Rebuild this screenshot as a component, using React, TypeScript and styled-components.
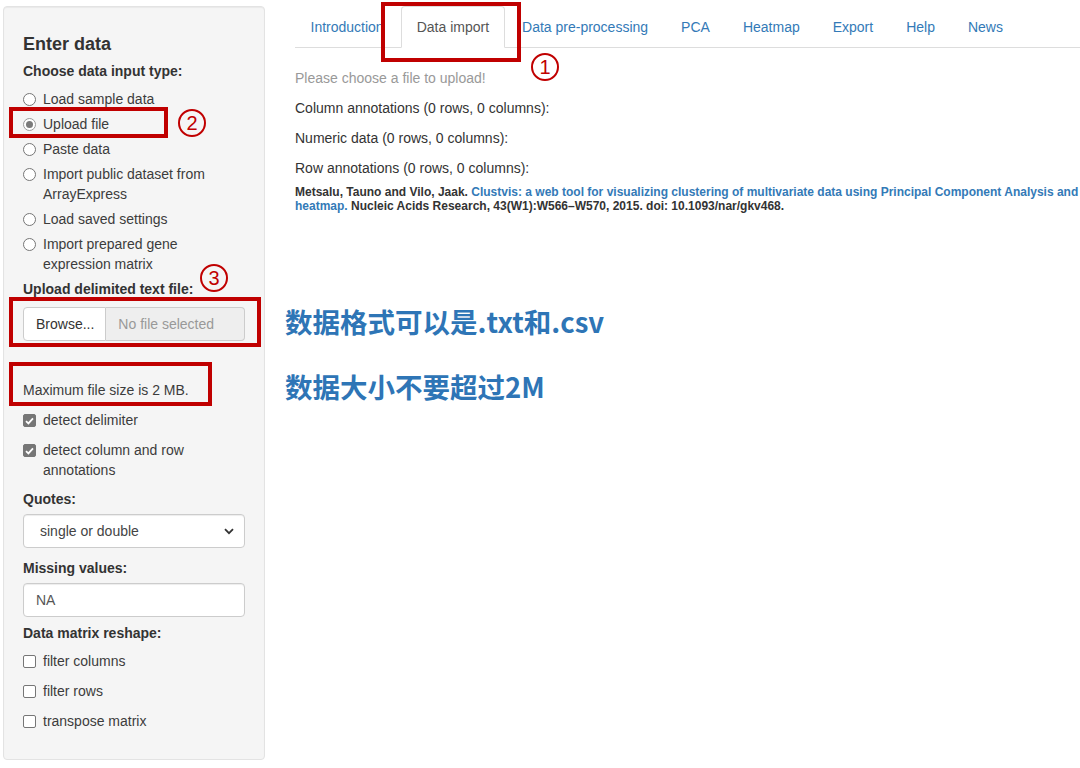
import React from "react";
import styled, { createGlobalStyle } from "styled-components";

const Global = createGlobalStyle`
  html, body { margin: 0; padding: 0; background: #fff; }
  body {
    font-family: "Liberation Sans", Arial, Helvetica, sans-serif;
    font-size: 14px;
    line-height: 20px;
    color: #333;
    width: 1080px;
    height: 768px;
    overflow: hidden;
  }
  * { box-sizing: border-box; }
`;

const Page = styled.div`
  position: relative;
  display: grid;
  grid-template-columns: 262px 1fr;
  column-gap: 30px;
  padding: 6px 0 0 3px;
  height: 768px;
`;

const Panel = styled.aside`
  align-self: start;
  display: flex;
  flex-direction: column;
  background: #f5f5f5;
  border: 1px solid #e3e3e3;
  border-radius: 4px;
  box-shadow: inset 0 1px 1px rgba(0, 0, 0, 0.05);
  padding: 27px 19px 28px;
`;

const Heading = styled.h4`
  margin: 0;
  font-size: 18px;
  line-height: 20px;
  font-weight: bold;
  color: #333;
`;

const FieldLabel = styled.div<{ $mt: number }>`
  margin-top: ${(p) => p.$mt}px;
  font-weight: bold;
  color: #333;
`;

const OptionList = styled.div<{ $mt: number; $gap: number }>`
  margin-top: ${(p) => p.$mt}px;
  display: flex;
  flex-direction: column;
  gap: ${(p) => p.$gap}px;
`;

const Option = styled.div`
  position: relative;
  display: flex;
  align-items: flex-start;
  gap: 7px;
  color: #3c3c3c;
`;

const RadioMark = styled.span<{ $on?: boolean }>`
  flex: none;
  width: 13px;
  height: 13px;
  margin-top: 4px;
  border-radius: 50%;
  border: 1px solid ${(p) => (p.$on ? "#9a9a9a" : "#767676")};
  background: #fff;
  display: grid;
  place-items: center;
  &::after {
    content: "";
    width: 7px;
    height: 7px;
    border-radius: 50%;
    background: ${(p) => (p.$on ? "#7a7a7a" : "transparent")};
  }
`;

const CheckMark = styled.span<{ $on?: boolean }>`
  flex: none;
  width: 13px;
  height: 13px;
  margin-top: 4px;
  border-radius: 2px;
  border: 1px solid #767676;
  background: ${(p) => (p.$on ? "#767676" : "#fff")};
  display: grid;
  place-items: center;
`;

const FileRow = styled.div`
  position: relative;
  margin-top: 8px;
  display: flex;
  height: 34px;
`;

const BrowseButton = styled.span`
  display: flex;
  align-items: center;
  padding: 0 11px 0 12px;
  background: #fff;
  border: 1px solid #ccc;
  border-radius: 4px 0 0 4px;
  color: #333;
`;

const FileName = styled.span`
  flex: 1;
  display: flex;
  align-items: center;
  padding-left: 12px;
  background: #eee;
  border: 1px solid #ccc;
  border-left: none;
  border-radius: 0 4px 4px 0;
  color: #999;
`;

const Note = styled.div`
  position: relative;
  margin-top: 39px;
  color: #3c3c3c;
`;

const SelectBox = styled.div`
  margin-top: 5px;
  height: 34px;
  display: flex;
  align-items: center;
  justify-content: space-between;
  padding: 0 10px 0 16px;
  background: #fff;
  border: 1px solid #ccc;
  border-radius: 4px;
  box-shadow: inset 0 1px 1px rgba(0, 0, 0, 0.075);
  color: #444;
`;

const TextBox = styled.div`
  margin-top: 5px;
  height: 34px;
  display: flex;
  align-items: center;
  padding: 0 12px;
  background: #fff;
  border: 1px solid #ccc;
  border-radius: 4px;
  box-shadow: inset 0 1px 1px rgba(0, 0, 0, 0.075);
  color: #555;
`;

const Main = styled.main`
  display: flex;
  flex-direction: column;
  min-width: 0;
`;

const Tabs = styled.ul`
  display: flex;
  margin: 0;
  padding: 0;
  list-style: none;
  border-bottom: 1px solid #ddd;
`;

const Tab = styled.li<{ $active?: boolean }>`
  position: relative;
  margin: 0 2px -1px 0;
  padding: 10px 14.5px;
  border: 1px solid ${(p) => (p.$active ? "#ddd" : "transparent")};
  border-bottom-color: ${(p) => (p.$active ? "#fff" : "transparent")};
  border-radius: 4px 4px 0 0;
  background: ${(p) => (p.$active ? "#fff" : "transparent")};
  color: ${(p) => (p.$active ? "#555" : "#337ab7")};
  white-space: nowrap;
`;

const Status = styled.p`
  margin: 20px 0 0;
  color: #999;
`;

const Info = styled.p`
  margin: 10px 0 0;
  color: #333;
`;

const Citation = styled.p`
  margin: 7px 0 0;
  font-size: 12px;
  line-height: 14px;
  font-weight: bold;
  color: #333;
`;

const CiteLink = styled.span`
  color: #337ab7;
`;

const RedBox = styled.span<{ $t: number; $l: number; $w: number; $h: number }>`
  position: absolute;
  top: ${(p) => p.$t}px;
  left: ${(p) => p.$l}px;
  width: ${(p) => p.$w}px;
  height: ${(p) => p.$h}px;
  border: 4px solid #c00000;
  pointer-events: none;
`;

const Badge = styled.span<{ $t: number; $l: number }>`
  position: absolute;
  top: ${(p) => p.$t}px;
  left: ${(p) => p.$l}px;
  width: 28px;
  height: 28px;
  border: 2px solid #c00000;
  border-radius: 50%;
  display: grid;
  place-items: center;
  color: #c00000;
  font-family: "Liberation Sans", Arial, sans-serif;
  font-size: 20px;
  line-height: 1;
  font-weight: normal;
`;

const Callout = styled.div<{ $t: number }>`
  position: absolute;
  top: ${(p) => p.$t}px;
  left: 285px;
  font-family: "Noto Sans CJK SC", "Noto Sans", sans-serif;
  font-size: 27.5px;
  line-height: 36px;
  font-weight: bold;
  color: #2e75b6;
  white-space: nowrap;
`;

const Check = () => (
  <svg width="9" height="8" viewBox="0 0 9 8">
    <polyline points="1,4.2 3.4,6.4 8,1.4" fill="none" stroke="#fff" strokeWidth="1.8" />
  </svg>
);

const Chevron = () => (
  <svg width="10" height="7" viewBox="0 0 10 7">
    <polyline points="1,1.2 5,5.2 9,1.2" fill="none" stroke="#333" strokeWidth="1.8" />
  </svg>
);

const radios = [
  "Load sample data",
  "Upload file",
  "Paste data",
  "Import public dataset from ArrayExpress",
  "Load saved settings",
  "Import prepared gene expression matrix",
];

const tabs = ["Introduction", "Data import", "Data pre-processing", "PCA", "Heatmap", "Export", "Help", "News"];

export default function App() {
  return (
    <>
      <Global />
      <Page>
        <Panel>
          <Heading>Enter data</Heading>
          <FieldLabel $mt={7}>Choose data input type:</FieldLabel>
          <OptionList $mt={8} $gap={5}>
            {radios.map((r) => (
              <Option key={r}>
                <RadioMark $on={r === "Upload file"} />
                <span>{r}</span>
                {r === "Upload file" && (
                  <>
                    <RedBox $t={-7} $l={-14} $w={159} $h={31} />
                    <Badge $t={-5} $l={155}>2</Badge>
                  </>
                )}
              </Option>
            ))}
          </OptionList>
          <FieldLabel $mt={5}>Upload delimited text file:</FieldLabel>
          <FileRow>
            <BrowseButton>Browse...</BrowseButton>
            <FileName>No file selected</FileName>
            <RedBox $t={-10} $l={-14} $w={252} $h={50} />
            <Badge $t={-43} $l={177}>3</Badge>
          </FileRow>
          <Note>
            Maximum file size is 2 MB.
            <RedBox $t={-18} $l={-14} $w={203} $h={44} />
          </Note>
          <OptionList $mt={10} $gap={10}>
            <Option>
              <CheckMark $on>
                <Check />
              </CheckMark>
              <span>detect delimiter</span>
            </Option>
            <Option>
              <CheckMark $on>
                <Check />
              </CheckMark>
              <span>detect column and row annotations</span>
            </Option>
          </OptionList>
          <FieldLabel $mt={9}>Quotes:</FieldLabel>
          <SelectBox>
            <span>single or double</span>
            <Chevron />
          </SelectBox>
          <FieldLabel $mt={10}>Missing values:</FieldLabel>
          <TextBox>NA</TextBox>
          <FieldLabel $mt={6}>Data matrix reshape:</FieldLabel>
          <OptionList $mt={8} $gap={10}>
            {["filter columns", "filter rows", "transpose matrix"].map((c) => (
              <Option key={c}>
                <CheckMark />
                <span>{c}</span>
              </Option>
            ))}
          </OptionList>
        </Panel>

        <Main>
          <Tabs>
            {tabs.map((t) => (
              <Tab key={t} $active={t === "Data import"}>
                {t}
                {t === "Data import" && (
                  <>
                    <RedBox $t={-5} $l={-21} $w={140} $h={60} />
                    <Badge $t={46} $l={129}>1</Badge>
                  </>
                )}
              </Tab>
            ))}
          </Tabs>
          <Status>Please choose a file to upload!</Status>
          <Info>Column annotations (0 rows, 0 columns):</Info>
          <Info>Numeric data (0 rows, 0 columns):</Info>
          <Info>Row annotations (0 rows, 0 columns):</Info>
          <Citation>
            Metsalu, Tauno and Vilo, Jaak.{" "}
            <CiteLink>
              Clustvis: a web tool for visualizing clustering of multivariate data using Principal Component Analysis and
            </CiteLink>
            <br />
            <CiteLink>heatmap.</CiteLink> Nucleic Acids Research, 43(W1):W566–W570, 2015. doi: 10.1093/nar/gkv468.
          </Citation>
        </Main>

        <Callout $t={303}>数据格式可以是.txt和.csv</Callout>
        <Callout $t={368}>数据大小不要超过2M</Callout>
      </Page>
    </>
  );
}
